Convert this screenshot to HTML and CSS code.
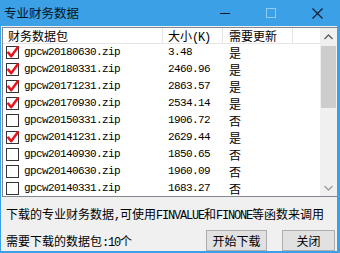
FILE: index.html
```html
<!DOCTYPE html>
<html lang="zh-CN">
<head>
    <meta charset="UTF-8">
    <title>专业财务数据</title>
    <link rel="stylesheet" href="styles.css">
</head>
<body>
    <svg class="defs" width="0" height="0">
        <symbol id="tick" viewBox="0 0 13 13">
            <path d="M2.3 6.6 L5.2 10.2 L11.8 1.2" fill="none" stroke="#e8141c" stroke-width="2.5" stroke-linecap="round" stroke-linejoin="round"/>
        </symbol>
    </svg>

    <div class="window">
        <div class="titlebar">
            <span class="title">专业财务数据</span>
            <div class="caption-buttons">
                <span class="cap-btn">
                    <svg width="10" height="10" viewBox="0 0 10 10"><path d="M0 5.5 H10" stroke="#0c1a2b" stroke-width="1"/></svg>
                </span>
                <span class="cap-btn">
                    <svg width="10" height="10" viewBox="0 0 10 10"><rect x="0.5" y="0.5" width="9" height="9" fill="none" stroke="#8fcbf3" stroke-width="1"/></svg>
                </span>
                <span class="cap-btn">
                    <svg width="11" height="11" viewBox="0 0 11 11"><path d="M0.5 0.5 L10.5 10.5 M10.5 0.5 L0.5 10.5" stroke="#0c1a2b" stroke-width="1.1"/></svg>
                </span>
            </div>
        </div>

        <div class="content">
            <div class="list">
                <div class="list-main">
                    <div class="row list-header">
                        <div class="c1 head-cell">财务数据包</div>
                        <div class="c2 head-cell">大小<span class="en big">(K)</span></div>
                        <div class="c3 head-cell">需要更新</div>
                    </div>

                    <div class="row">
                        <div class="c1"><span class="box"><svg><use href="#tick"/></svg></span><span class="en">gpcw20180630.zip</span></div>
                        <div class="c2 en">3.48</div>
                        <div class="c3">是</div>
                    </div>
                    <div class="row">
                        <div class="c1"><span class="box"><svg><use href="#tick"/></svg></span><span class="en">gpcw20180331.zip</span></div>
                        <div class="c2 en">2460.96</div>
                        <div class="c3">是</div>
                    </div>
                    <div class="row">
                        <div class="c1"><span class="box"><svg><use href="#tick"/></svg></span><span class="en">gpcw20171231.zip</span></div>
                        <div class="c2 en">2863.57</div>
                        <div class="c3">是</div>
                    </div>
                    <div class="row">
                        <div class="c1"><span class="box"><svg><use href="#tick"/></svg></span><span class="en">gpcw20170930.zip</span></div>
                        <div class="c2 en">2534.14</div>
                        <div class="c3">是</div>
                    </div>
                    <div class="row">
                        <div class="c1"><span class="box"></span><span class="en">gpcw20150331.zip</span></div>
                        <div class="c2 en">1906.72</div>
                        <div class="c3">否</div>
                    </div>
                    <div class="row">
                        <div class="c1"><span class="box"><svg><use href="#tick"/></svg></span><span class="en">gpcw20141231.zip</span></div>
                        <div class="c2 en">2629.44</div>
                        <div class="c3">是</div>
                    </div>
                    <div class="row">
                        <div class="c1"><span class="box"></span><span class="en">gpcw20140930.zip</span></div>
                        <div class="c2 en">1850.65</div>
                        <div class="c3">否</div>
                    </div>
                    <div class="row">
                        <div class="c1"><span class="box"></span><span class="en">gpcw20140630.zip</span></div>
                        <div class="c2 en">1960.09</div>
                        <div class="c3">否</div>
                    </div>
                    <div class="row">
                        <div class="c1"><span class="box"></span><span class="en">gpcw20140331.zip</span></div>
                        <div class="c2 en">1683.27</div>
                        <div class="c3">否</div>
                    </div>
                </div>

                <div class="scrollbar">
                    <span class="arrow">
                        <svg width="9" height="6" viewBox="0 0 9 6"><path d="M0.5 5 L4.5 1 L8.5 5" fill="none" stroke="#606060" stroke-width="1.4"/></svg>
                    </span>
                    <div class="track">
                        <div class="thumb"></div>
                    </div>
                    <span class="arrow">
                        <svg width="9" height="6" viewBox="0 0 9 6"><path d="M0.5 1 L4.5 5 L8.5 1" fill="none" stroke="#a0a0a0" stroke-width="1.4"/></svg>
                    </span>
                </div>
            </div>

            <p class="info">下载的专业财务数据<span class="en big">,</span>可使用<span class="en big">FINVALUE</span>和<span class="en big">FINONE</span>等函数来调用</p>

            <div class="footer">
                <span class="count">需要下载的数据包<span class="en big">:10</span>个</span>
                <button class="btn btn-start">开始下载</button>
                <button class="btn btn-close">关闭</button>
            </div>
        </div>
    </div>
</body>
</html>
```

FILE: styles.css
```css
body {
    margin: 0;
    padding: 0;
    font-family: "Noto Sans CJK SC", sans-serif;
    font-size: 12px;
    color: #000;
    background: #fff;
}

.defs {
    position: absolute;
}

.window {
    width: 340px;
    height: 253px;
    display: flex;
    flex-direction: column;
}

/* title bar */
.titlebar {
    height: 26px;
    flex-shrink: 0;
    background-color: #3ba0e6;
    display: flex;
    align-items: center;
    padding-left: 4px;
}

.title {
    flex: 1;
    font-size: 12.5px;
    line-height: 26px;
    color: #061423;
}

.caption-buttons {
    display: flex;
    height: 26px;
}

.cap-btn {
    width: 46px;
    display: flex;
    align-items: center;
    justify-content: center;
}

/* dialog area */
.content {
    flex: 1;
    background-color: #f0f0f0;
    border: solid #3ba0e6;
    border-width: 0 3px 2px 1px;
    padding: 1px 0 0 1px;
    display: flex;
    flex-direction: column;
}

.list {
    height: 170px;
    flex-shrink: 0;
    box-sizing: border-box;
    border: 1px solid #828790;
    border-right: none;
    background-color: #fff;
    display: flex;
    overflow: hidden;
}

.list-main {
    flex: 1;
    overflow: hidden;
}

.row {
    display: flex;
    height: 17px;
    line-height: 17px;
    white-space: nowrap;
}

.list-header {
    height: 15px;
    line-height: 15px;
    border-bottom: 1px solid #e5e5e5;
}

.c1, .c2, .c3 {
    box-sizing: border-box;
    height: 100%;
}

.c1 {
    width: 160px;
    padding-left: 3px;
    display: flex;
    align-items: center;
    gap: 5px;
}

.c2 {
    width: 60px;
    padding-left: 5px;
}

.c3 {
    width: 70px;
    padding-left: 6px;
}

.head-cell {
    border-right: 1px solid #e5e5e5;
}

.list-header .c1 {
    padding-left: 5px;
}

.en {
    font-family: "Liberation Mono", monospace;
    font-size: 11px;
    letter-spacing: -0.6px;
}

.en.big {
    font-size: 12px;
    letter-spacing: -1.2px;
}

.box {
    width: 13px;
    height: 13px;
    box-sizing: border-box;
    border: 1px solid #333;
    background: #fff;
    flex-shrink: 0;
    position: relative;
}

.box svg {
    position: absolute;
    left: -1px;
    top: -1px;
    width: 13px;
    height: 13px;
}

/* scrollbar */
.scrollbar {
    width: 17px;
    background-color: #f0f0f0;
    display: flex;
    flex-direction: column;
}

.arrow {
    height: 17px;
    display: flex;
    align-items: center;
    justify-content: center;
}

.track {
    flex: 1;
    padding-top: 1px;
}

.thumb {
    height: 62px;
    margin: 0 1px;
    background-color: #cdcdcd;
}

/* bottom part */
.info {
    margin: 9px 0 0 4px;
    line-height: 16px;
    white-space: nowrap;
}

.footer {
    display: flex;
    align-items: center;
    margin-top: 6px;
    padding: 0 2px 0 4px;
}

.count {
    flex: 1;
}

.btn {
    height: 21px;
    box-sizing: border-box;
    font-family: "Noto Sans CJK SC", sans-serif;
    font-size: 12px;
    border: 1px solid #adadad;
    background-color: #e1e1e1;
    padding: 0;
}

.btn-start {
    width: 61px;
    margin-right: 15px;
}

.btn-close {
    width: 53px;
}
```
